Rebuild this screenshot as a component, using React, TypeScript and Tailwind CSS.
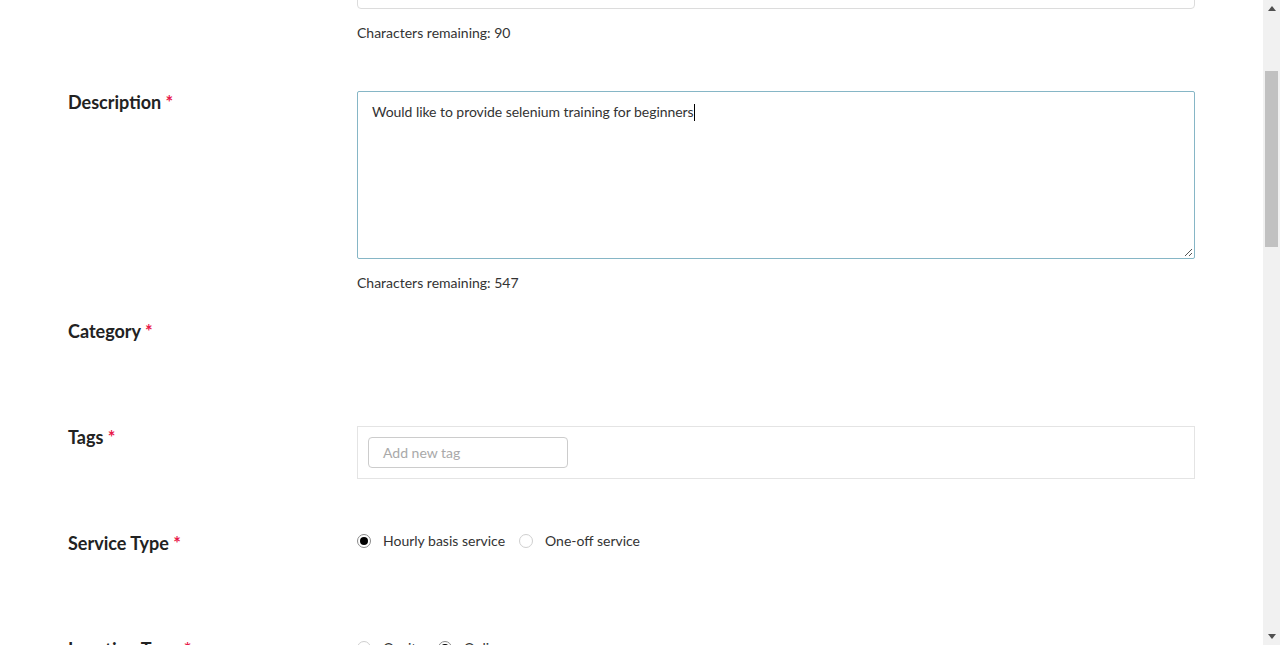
import React from "react";

const font = { fontFamily: "Lato, 'Open Sans', sans-serif" };

function Label({ text }: { text: string }) {
  return (
    <div className="w-[289px] shrink-0 text-[18px] leading-[22px] font-bold text-[#222]">
      {text} <span className="text-[#e8174a] text-[18px]">*</span>
    </div>
  );
}

function Radio({ checked, label }: { checked?: boolean; label: string }) {
  return (
    <div className="flex items-center">
      <span
        className={
          "w-[14px] h-[14px] rounded-full border flex items-center justify-center bg-white " +
          (checked ? "border-[#8a8a8a]" : "border-[#cfcfcf]")
        }
      >
        {checked && <span className="w-[8px] h-[8px] rounded-full bg-black" />}
      </span>
      <span className="ml-[12px] text-[14px] leading-[20px] text-[#333]">{label}</span>
    </div>
  );
}

export default function App() {
  return (
    <div className="h-[645px] w-[1280px] overflow-hidden flex bg-white" style={font}>
      <div className="flex-1 flex flex-col pl-[68px]">
        {/* Top (title) field, partially scrolled off */}
        <div className="flex shrink-0">
          <div className="w-[289px] shrink-0" />
          <div className="w-[838px] flex flex-col">
            <div className="h-[40px] -mt-[31px] border border-[#dcdcdc] rounded-[4px]" />
            <div className="mt-[14px] text-[14px] leading-[20px] text-[#333]">Characters remaining: 90</div>
          </div>
        </div>

        {/* Description */}
        <div className="flex shrink-0 mt-[48px]">
          <Label text="Description" />
          <div className="w-[838px] flex flex-col">
            <div className="relative h-[168px] border border-[#86b6c6] rounded-[2px] pl-[14px] pt-[10px]">
              <div className="text-[14px] leading-[20px] text-[#333] tracking-[-0.05px] flex items-center">
                <span>Would like to provide selenium training for beginners</span>
                <span className="inline-block w-px h-[17px] bg-black" />
              </div>
              <svg className="absolute right-[1px] bottom-[1px]" width="10" height="10" viewBox="0 0 10 10">
                <line x1="9" y1="2" x2="2" y2="9" stroke="#555" strokeWidth="1" />
                <line x1="9" y1="6" x2="6" y2="9" stroke="#555" strokeWidth="1" />
              </svg>
            </div>
            <div className="mt-[14px] text-[14px] leading-[20px] text-[#333]">Characters remaining: 547</div>
          </div>
        </div>

        {/* Category */}
        <div className="flex shrink-0 mt-[27px] h-[106px]">
          <Label text="Category" />
        </div>

        {/* Tags */}
        <div className="flex shrink-0 h-[106px]">
          <Label text="Tags" />
          <div className="w-[838px]">
            <div className="h-[53px] border border-[#e4e4e4] p-[10px]">
              <div className="w-[200px] h-[31px] border border-[#cccccc] rounded-[4px] pl-[14px] flex items-center text-[14px] text-[#a9a9a9]">
                Add new tag
              </div>
            </div>
          </div>
        </div>

        {/* Service Type */}
        <div className="flex shrink-0 h-[106px]">
          <Label text="Service Type" />
          <div className="flex items-start gap-[14px] -mt-[1px]">
            <Radio checked label="Hourly basis service" />
            <Radio label="One-off service" />
          </div>
        </div>

        {/* Location Type */}
        <div className="flex shrink-0 h-[106px]">
          <Label text="Location Type" />
          <div className="flex items-start gap-[14px] mt-[0px]">
            <Radio label="Onsite" />
            <Radio checked label="Online" />
          </div>
        </div>
      </div>

      {/* Scrollbar */}
      <div className="w-[17px] shrink-0 bg-[#f1f1f1] flex flex-col">
        <div className="h-[17px] flex items-center justify-center">
          <svg width="8" height="5" viewBox="0 0 8 5">
            <polygon points="0,5 8,5 4,0" fill="#505050" />
          </svg>
        </div>
        <div className="flex-1 flex flex-col">
          <div className="h-[54px]" />
          <div className="h-[176px] mx-[2px] bg-[#c1c1c1]" />
          <div className="flex-1" />
        </div>
        <div className="h-[17px] flex items-center justify-center">
          <svg width="8" height="5" viewBox="0 0 8 5">
            <polygon points="0,0 8,0 4,5" fill="#505050" />
          </svg>
        </div>
      </div>
    </div>
  );
}
